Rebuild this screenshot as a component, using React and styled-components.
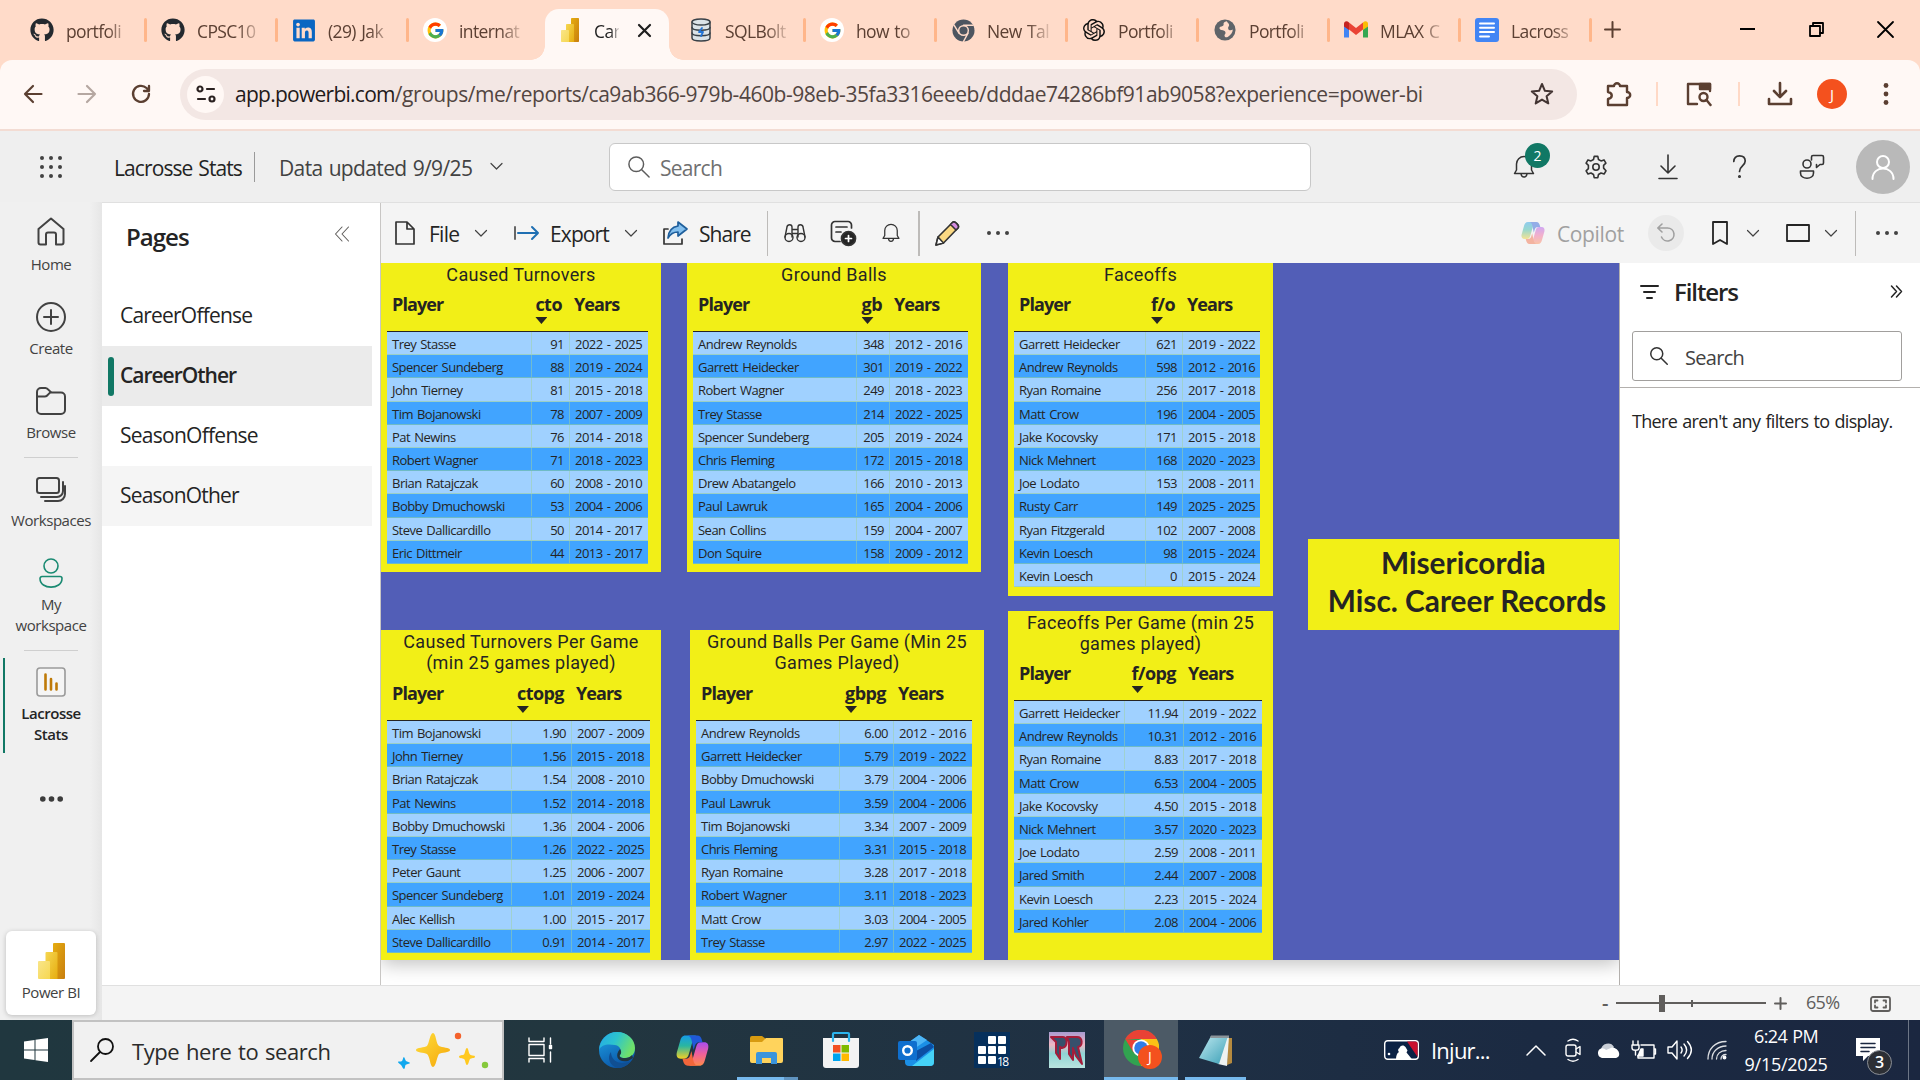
import React from "react";
import styled, { createGlobalStyle, css } from "styled-components";
import { FaGithub, FaLinkedin } from "react-icons/fa";
import { FcGoogle } from "react-icons/fc";
import { SiOpenai } from "react-icons/si";

const Global = createGlobalStyle`
  * { box-sizing: border-box; }
  html, body { margin: 0; padding: 0; overflow: hidden; }
  body { font-family: "Open Sans", "Noto Sans", sans-serif; color: #242424; }
`;

const Screen = styled.div`
  width: 1920px;
  height: 1080px;
  display: flex;
  flex-direction: column;
  overflow: hidden;
  background: #f0f0f0;
`;

const Label = styled.span`
  display: block;
  flex: none;
  white-space: nowrap;
  font-size: ${(p) => p.$size || 21}px;
  font-weight: ${(p) => p.$weight || 400};
  color: ${(p) => p.$color || "#242424"};
  letter-spacing: ${(p) => (p.$track === undefined ? -0.035 : p.$track)}em;
  word-spacing: 0.06em;
  margin-left: ${(p) => p.$gap || 0}px;
  padding-top: ${(p) => (p.$down || 0) * 2}px;
  width: ${(p) => (p.$w ? `${p.$w}px` : "auto")};
  text-align: ${(p) => p.$align || "left"};
  line-height: ${(p) => p.$line || 1.3};
`;

const Glyph = styled.svg.attrs((p) => ({
  viewBox: p.viewBox || `0 0 ${p.$w} ${p.$h || p.$w}`,
  width: p.$w,
  height: p.$h || p.$w,
}))`
  display: block;
  flex: none;
  margin-left: ${(p) => p.$gap || 0}px;
  fill: ${(p) => p.$fill || "none"};
  stroke: ${(p) => p.$stroke || "none"};
  stroke-width: ${(p) => p.$sw || 1.7};
  stroke-linecap: round;
  stroke-linejoin: round;
  opacity: ${(p) => (p.$faded ? 0.45 : 1)};
  overflow: visible;
`;

const Rule = styled.span`
  flex: none;
  width: ${(p) => p.$w || 1}px;
  height: ${(p) => p.$h}px;
  margin-left: ${(p) => p.$gap || 0}px;
  background: ${(p) => p.$color || "#bdbbb9"};
`;

/* ---------- browser tab strip ---------- */

const TabStrip = styled.div`
  height: 60px;
  flex: none;
  display: flex;
  align-items: flex-start;
  padding-left: 14px;
  background: #ffdbc9;
`;

const TabItem = styled.div`
  width: 131px;
  height: 60px;
  flex: none;
  display: flex;
  align-items: center;
  padding-left: 16px;
`;

const TabIcon = styled.span`
  width: 24px;
  height: 24px;
  flex: none;
  display: flex;
  align-items: center;
  justify-content: center;
  color: ${(p) => p.$color || "#24292f"};
  background: ${(p) => p.$bg || "transparent"};
  border-radius: ${(p) => (p.$bg ? "50%" : 0)};
`;

const TabText = styled.span`
  width: ${(p) => p.$w || 63}px;
  margin: 1px 0 0 12px;
  flex: none;
  white-space: nowrap;
  font-size: 17.500px;
  letter-spacing: -0.035em;
  word-spacing: 0.08em;
  color: ${(p) => p.$color || "#5c4033"};
  mask-image: linear-gradient(to right, #000 65%, rgba(0, 0, 0, 0.15) 100%);
`;

const TabSeparator = styled.span`
  width: 3px;
  height: 24px;
  margin-left: 14.5px;
  flex: none;
  border-radius: 2px;
  background: ${(p) => (p.$hidden ? "transparent" : "#ffb68a")};
`;

const ActiveTab = styled.div`
  position: relative;
  width: 124px;
  height: 51px;
  flex: none;
  margin: 9px 0 0 7px;
  padding: 0 0 9px 13px;
  display: flex;
  align-items: center;
  border-radius: 14px 14px 0 0;
  background: #fff8f5;
  &::before, &::after {
    content: "";
    position: absolute;
    bottom: 0;
    width: 14px;
    height: 14px;
  }
  &::before { left: -14px; background: radial-gradient(circle at 0 0, transparent 13.5px, #fff8f5 14px); }
  &::after { right: -14px; background: radial-gradient(circle at 100% 0, transparent 13.5px, #fff8f5 14px); }
`;

const WindowControls = styled.div`
  display: flex;
  align-items: center;
  height: 58px;
`;

/* ---------- browser toolbar ---------- */

const ToolbarBack = styled.div`
  height: 71px;
  flex: none;
  background: #ffdbc9;
`;

const BrowserToolbar = styled.div`
  height: 71px;
  padding-bottom: 1px;
  display: flex;
  align-items: center;
  border-radius: 12px 12px 0 0;
  border-bottom: 2px solid #f3dcd3;
  background: #fff8f5;
`;

const AddressBar = styled.div`
  width: 1397px;
  height: 51px;
  flex: none;
  margin-left: 30px;
  padding-left: 7px;
  display: flex;
  align-items: center;
  border-radius: 26px;
  background: #f3e7e4;
`;

const SiteChip = styled.span`
  width: 37px;
  height: 37px;
  flex: none;
  display: flex;
  align-items: center;
  justify-content: center;
  border-radius: 50%;
  background: #fff8f5;
`;

const Profile = styled.span`
  width: 30px;
  height: 30px;
  margin-left: 25px;
  flex: none;
  border-radius: 50%;
  text-align: center;
  font-size: 15px;
  line-height: 30px;
  color: #fff;
  background: #f4511e;
`;

/* ---------- power bi shell ---------- */

const ServiceHeader = styled.header`
  height: 71px;
  flex: none;
  display: flex;
  align-items: center;
  background: #efefef;
`;

const SearchField = styled.div`
  width: ${(p) => p.$w}px;
  height: ${(p) => p.$h}px;
  flex: none;
  margin-left: ${(p) => p.$gap || 0}px;
  padding-left: 17px;
  display: flex;
  align-items: center;
  border: 1px solid ${(p) => p.$border};
  border-radius: ${(p) => p.$radius || 6}px;
  background: #fff;
`;

const BellWrap = styled.span`
  position: relative;
  flex: none;
  margin-left: 202px;
`;

const Badge = styled.span`
  position: absolute;
  left: 12px;
  top: -12px;
  width: 25px;
  height: 25px;
  border-radius: 50%;
  text-align: center;
  font-size: 14px;
  line-height: 25px;
  color: #fff;
  background: #117865;
`;

const Avatar = styled.span`
  width: 54px;
  height: 54px;
  flex: none;
  margin-left: 31px;
  display: flex;
  align-items: center;
  justify-content: center;
  border-radius: 50%;
  background: #b9b9b9;
`;

const Body = styled.div`
  height: 818px;
  flex: none;
  display: flex;
`;

const Rail = styled.nav`
  width: 102px;
  flex: none;
  display: flex;
  flex-direction: column;
  align-items: center;
  background: linear-gradient(to right, #f0f0f0 88%, #e6e6e6);
`;

const RailItem = styled.div`
  width: ${(p) => (p.$active ? 96 : 102)}px;
  height: ${(p) => p.$h}px;
  padding: ${(p) => p.$top || 0}px 2px 0 0;
  flex: none;
  display: flex;
  flex-direction: column;
  align-items: center;
  border-left: 2px solid ${(p) => (p.$active ? "#117865" : "transparent")};
  margin-top: ${(p) => (p.$active ? 7 : 0)}px;
`;

const RailText = styled.span`
  margin-top: ${(p) => p.$gap || 6}px;
  text-align: center;
  font-size: 15px;
  line-height: 21px;
  letter-spacing: -0.03em;
  font-weight: ${(p) => (p.$strong ? 600 : 400)};
  color: ${(p) => (p.$strong ? "#242424" : "#424242")};
`;

const RailRule = styled.span`
  width: 54px;
  height: 1px;
  flex: none;
  background: #cfcfcf;
`;

const PowerCard = styled.div`
  width: 90px;
  height: 84px;
  flex: none;
  margin: 0 0 5px;
  padding-top: 12px;
  display: flex;
  flex-direction: column;
  align-items: center;
  border-radius: 6px;
  background: #fff;
  box-shadow: 0 1px 5px rgba(0, 0, 0, 0.22);
`;

const Spacer = styled.span`
  flex: ${(p) => (p.$w ? "none" : 1)};
  width: ${(p) => (p.$w ? `${p.$w}px` : "auto")};
`;

const Main = styled.main`
  width: 1818px;
  flex: none;
  display: flex;
  flex-direction: column;
  border-top: 1px solid #e0e0e0;
`;

const Workspace = styled.div`
  height: 782px;
  flex: none;
  display: flex;
`;

const PagesPane = styled.aside`
  width: 279px;
  flex: none;
  border-right: 1px solid #c8c6c4;
  background: #fff;
`;

const PagesHead = styled.div`
  height: 83px;
  padding: 0 31px 15px 24px;
  display: flex;
  align-items: center;
  justify-content: space-between;
`;

const PageLink = styled.div`
  width: 270px;
  height: 60px;
  padding-left: ${(p) => (p.$selected ? 6 : 18)}px;
  display: flex;
  align-items: center;
  background: ${(p) => (p.$selected ? "#ebebeb" : p.$hover ? "#f5f5f5" : "#fff")};
`;

const SelectedBar = styled.span`
  width: 6px;
  height: 39px;
  margin-right: 6px;
  border-radius: 3px;
  background: #117865;
`;

const ReportArea = styled.section`
  flex: 1;
  min-width: 0;
  display: flex;
  flex-direction: column;
`;

const ReportToolbar = styled.div`
  height: 60px;
  flex: none;
  display: flex;
  align-items: center;
  background: #f4f4f4;
`;

const UndoButton = styled.span`
  width: 36px;
  height: 36px;
  margin-left: 17px;
  flex: none;
  display: flex;
  align-items: center;
  justify-content: center;
  border-radius: 50%;
  background: #eaeaea;
`;

const ReportRow = styled.div`
  flex: 1;
  min-height: 0;
  display: flex;
`;

const Stage = styled.div`
  width: 1238px;
  flex: none;
  overflow: hidden;
  background: #fff;
`;

const Canvas = styled.div`
  height: 697px;
  display: flex;
  align-items: flex-start;
  background: #525eb7;
  box-shadow: 0 4px 18px rgba(0, 0, 0, 0.25);
`;

const Column = styled.div`
  flex: none;
  margin-left: ${(p) => p.$gap}px;
  display: flex;
  flex-direction: column;
`;

const Visual = styled.article`
  width: ${(p) => p.$w}px;
  height: ${(p) => p.$h}px;
  margin: ${(p) => p.$top || 0}px 0 0 ${(p) => p.$left || 0}px;
  padding: 1px 0 0 6px;
  display: flex;
  flex-direction: column;
  background: #f2ef17;
`;

const VisualTitle = styled.h3`
  margin: 0 0 0 -6px;
  height: ${(p) => p.$h}px;
  text-align: center;
  font-family: Roboto, sans-serif;
  font-weight: 400;
  font-size: 18px;
  line-height: 21px;
  letter-spacing: 0.018em;
  color: #252423;
`;

const gridColumns = css`
  display: grid;
  grid-template-columns: ${(p) => p.$cols.map((c) => `${c}px`).join(" ")};
`;

const HeadRow = styled.div`
  ${gridColumns}
  width: ${(p) => p.$cols.reduce((a, b) => a + b, 0)}px;
  height: 47px;
  border-bottom: 1px solid #252423;
`;

const HeadCell = styled.div`
  padding: 7px 0 0 5px;
  font-size: 18px;
  font-weight: 700;
  line-height: 25px;
  letter-spacing: -0.05em;
  white-space: nowrap;
  color: #252423;
`;

const ValueHead = styled(HeadCell)`
  display: flex;
  flex-direction: column;
  align-items: flex-end;
  padding: 7px 7px 0 0;
  letter-spacing: -0.03em;
`;

const SortArrow = styled.span`
  width: 12px;
  height: 7px;
  background: #252423;
  clip-path: polygon(0 0, 100% 0, 50% 100%);
`;

const HeadStack = styled.span`
  display: flex;
  flex-direction: column;
  align-items: flex-start;
`;

const DataRow = styled.div`
  ${gridColumns}
  width: ${(p) => p.$cols.reduce((a, b) => a + b, 0)}px;
  height: 23.2px;
  flex: none;
  background: ${(p) => (p.$odd ? "#41a4ff" : "#a0d1ff")};
  border-bottom: 1px solid rgba(150, 205, 150, 0.55);
`;

const Cell = styled.div`
  height: 22px;
  padding: 0 5px;
  font-size: 13px;
  line-height: 25px;
  letter-spacing: -0.04em;
  word-spacing: 1.2px;
  white-space: nowrap;
  text-align: ${(p) => (p.$num ? "right" : "left")};
  color: #252423;
  border-left: ${(p) => (p.$first ? "0" : "1px solid rgba(160, 210, 160, 0.5)")};
`;

const Banner = styled.div`
  width: 311px;
  height: 91px;
  flex: none;
  margin: 276px 0 0 35px;
  padding: 5px 0 0 7px;
  text-align: center;
  white-space: pre;
  font-family: Lato, sans-serif;
  font-size: 29.8px;
  font-weight: 700;
  line-height: 38px;
  color: #252423;
  background: #f2ef17;
`;

const FiltersPane = styled.aside`
  flex: 1;
  border-left: 1px solid #b3b0ad;
  background: #fff;
`;

const FiltersHead = styled.div`
  height: 68px;
  padding: 0 18px 11px 20px;
  display: flex;
  align-items: center;
`;

const FilterSearch = styled.div`
  padding: 0 0 6px 12px;
  border-bottom: 1px solid #b3b0ad;
`;

const FilterNote = styled.div`
  padding: 22px 0 0 12px;
`;

const StatusBar = styled.div`
  height: 35px;
  flex: none;
  display: flex;
  align-items: center;
  border-top: 1px solid #e0e0e0;
  background: #f4f4f4;
`;

const Slider = styled.div`
  width: 150px;
  height: 17px;
  margin-left: 6px;
  flex: none;
  display: flex;
  align-items: center;
`;

const SliderPart = styled.span`
  width: ${(p) => p.$w}px;
  height: ${(p) => p.$h}px;
  background: #605e5c;
`;

/* ---------- windows taskbar ---------- */

const Taskbar = styled.footer`
  height: 60px;
  flex: none;
  display: flex;
  align-items: stretch;
  background: linear-gradient(to right, #20373f 0%, #22363f 30%, #1f3044 60%, #1b2a42 80%, #1b2740 100%);
`;

const StartButton = styled.div`
  width: 72px;
  flex: none;
  display: flex;
  align-items: center;
  justify-content: center;
`;

const TaskSearch = styled.div`
  width: 432px;
  flex: none;
  padding-left: 16px;
  display: flex;
  align-items: center;
  border: 2px solid #c2c2c2;
  background: #f1f1f1;
`;

const TaskButton = styled.div`
  width: ${(p) => p.$w || 75}px;
  flex: none;
  display: flex;
  align-items: center;
  justify-content: center;
  background: ${(p) => (p.$active ? "#4c5a66" : "transparent")};
  border-bottom: 3px solid ${(p) => (p.$open ? "#76b9ed" : "transparent")};
  padding-top: 3px;
`;

const Stacked = styled.div`
  width: 14px;
  flex: none;
  border-bottom: 3px solid #5f93bf;
`;

const Tray = styled.div`
  flex: 1;
  display: flex;
  align-items: center;
`;

const Clock = styled.div`
  width: 106px;
  margin-left: 6px;
  flex: none;
  display: flex;
  flex-direction: column;
  align-items: center;
`;

const NoteWrap = styled.span`
  position: relative;
  flex: none;
  margin-left: 17px;
`;

const NoteCount = styled.span`
  position: absolute;
  left: 11px;
  top: 12px;
  width: 25px;
  height: 25px;
  border-radius: 50%;
  border: 1px solid #8b8f96;
  text-align: center;
  font-size: 16px;
  font-weight: 600;
  line-height: 23px;
  color: #fff;
  background: #2c2f35;
`;

/* ---------- drawings ---------- */

const PowerBiMark = ({ w, h }) => (
  <Glyph $w={w} $h={h} viewBox="0 0 27 36">
    <defs>
      <linearGradient id="pb1" x1="0" y1="0" x2="1" y2="1"><stop offset="0" stopColor="#e6ad10" /><stop offset="1" stopColor="#c87e0e" /></linearGradient>
      <linearGradient id="pb2" x1="0" y1="0" x2="1" y2="1"><stop offset="0" stopColor="#f6d751" /><stop offset="1" stopColor="#e6ad10" /></linearGradient>
      <linearGradient id="pb3" x1="0" y1="0" x2="1" y2="1"><stop offset="0" stopColor="#f9e589" /><stop offset="1" stopColor="#f6d751" /></linearGradient>
    </defs>
    <rect x="15" y="0" width="12" height="36" rx="1" fill="url(#pb1)" />
    <path d="M7.5 10a1 1 0 0 1 1-1h10a1 1 0 0 1 1 1v26h-12z" fill="url(#pb2)" />
    <path d="M0 19a1 1 0 0 1 1-1h10a1 1 0 0 1 1 1v17H1a1 1 0 0 1-1-1z" fill="url(#pb3)" />
  </Glyph>
);

const Chevron = ({ gap, w = 12 }) => (
  <Glyph $w={w} $h={7} viewBox="0 0 12 7" $gap={gap} $stroke="#424242" $sw={1.2}><path d="M.5.5 6 6 11.5.5" /></Glyph>
);

const Dots = ({ gap, size = 2, color = "#424242", span = 22 }) => (
  <Glyph $w={span} $h={6} $gap={gap} $fill={color}>
    <circle cx={size} cy="3" r={size} /><circle cx={span / 2} cy="3" r={size} /><circle cx={span - size} cy="3" r={size} />
  </Glyph>
);

const CopilotMark = ({ w, gap, faded, id }) => (
  <Glyph $w={w} viewBox="0 0 24 24" $gap={gap} $faded={faded}>
    <defs>
      <linearGradient id={`${id}a`} x1="0" y1="0" x2="0" y2="1"><stop offset="0" stopColor="#159be8" /><stop offset=".45" stopColor="#2ab6a0" /><stop offset="1" stopColor="#f4d023" /></linearGradient>
      <linearGradient id={`${id}b`} x1="0" y1="0" x2="0" y2="1"><stop offset="0" stopColor="#a74df0" /><stop offset=".5" stopColor="#f0609b" /><stop offset="1" stopColor="#ff8a4b" /></linearGradient>
    </defs>
    <path d="M15 1h-8C4.500 1 3.600 2.800 3 5L.6 13.500C0 16 1 18 3.500 18H6c2 0 2.800-1.500 3.300-3.200L12 5.500C12.600 3.200 13.500 1 15 1z" fill={`url(#${id}a)`} />
    <path d="M9 23h8c2.500 0 3.400-1.800 4-4l2.400-8.500C24 8 23 6 20.500 6H18c-2 0-2.800 1.500-3.300 3.200L12 18.500C11.400 20.800 10.500 23 9 23z" fill={`url(#${id}b)`} />
    <path d="M8 1h7.500c2 0 2.800 1.500 3.200 3l.6 2H17c-2 0-2.900 1.200-3.400 3l-.8 2.700-1.300-6.500C11 2.600 10 1 8 1z" fill="#2059d8" />
    <path d="M16 23H8.500c-2 0-2.800-1.500-3.200-3l-.6-2H7c2 0 2.900-1.200 3.400-3l.8-2.700 1.300 6.500C13 21.400 14 23 16 23z" fill="#f2663b" />
  </Glyph>
);

const ChromeMark = ({ w }) => (
  <Glyph $w={w} viewBox="0 0 48 48">
    <circle cx="24" cy="24" r="23" fill="#4d5560" />
    <path d="M24 13h20M14.500 29.500 4 12.500M33.500 29.500 24 47" stroke="#ffdbc9" strokeWidth="3" />
    <circle cx="24" cy="24" r="11.500" fill="#ffdbc9" />
    <circle cx="24" cy="24" r="8.500" fill="#4d5560" />
  </Glyph>
);

const Magnifier = ({ w, gap, color = "#5c5c5c", flip, sw = 1.6 }) => (
  <Glyph $w={w} viewBox="0 0 24 24" $gap={gap} $stroke={color} $sw={sw}>
    {flip ? <><circle cx="15.500" cy="8.500" r="7.500" /><path d="M10 14 1 23" /></> : <><circle cx="9" cy="9" r="8" /><path d="m15 15 8 8" /></>}
  </Glyph>
);

const Bell = ({ w, h, gap, box = "0 0 24 24" }) => (
  <Glyph $w={w} $h={h} viewBox={box} $gap={gap} $stroke="#333" $sw={1.5}>
    <path d="M2.500 18.500 4.500 15V9a7.500 7.500 0 0 1 15 0v6l2 3.500zM9 19c.3 2 1.300 3 3 3s2.700-1 3-3" />
  </Glyph>
);

const SqlMark = () => (
  <Glyph $w={22} $h={24} viewBox="0 0 22 24" $stroke="#3a4148" $sw={1.5}>
    <path d="M2 4v16c0 4 18 4 18 0V4" fill="#dce3e8" /><ellipse cx="11" cy="4" rx="9" ry="3" fill="#dce3e8" />
    <path d="M2 9.500c0 3.500 18 3.500 18 0M2 15c0 3.500 18 3.500 18 0" /><path d="m12 10-3 4h4l-2 4" stroke="#2474d6" strokeWidth="1.800" />
  </Glyph>
);

const GlobeMark = () => (
  <Glyph $w={22} viewBox="0 0 24 24">
    <circle cx="12" cy="12" r="11.500" fill="#5f6469" />
    <path d="M14 2.500c-3 .5-4 2-3.500 3.500s-2 2-3.500 2.500-1.500 3 1 3.500 4 .5 4.500 2.500-1.500 2.500-1 4 1.500 2 3.500 1c3.500-2 5.500-5 5.500-8-2 1-4.500 1-5-1s1-2.500 1-4-1.500-2-2.500-4z" fill="#ffdbc9" />
  </Glyph>
);

const GmailMark = () => (
  <Glyph $w={24} $h={18} viewBox="0 0 24 18">
    <path d="M0 3v13.500h5V7z" fill="#4285f4" /><path d="M24 3v13.500h-5V7z" fill="#34a853" />
    <path d="M5 8.500v-7l7 5.500 7-5.500v7L12 14z" fill="#ea4335" />
    <path d="M0 3C0 0 3-.5 5 1.500V9L0 5.500z" fill="#c5221f" /><path d="M19 1.500C21-.5 24 0 24 3v2.500L19 9z" fill="#fbbc04" />
  </Glyph>
);

const DocsMark = () => (
  <Glyph $w={24} viewBox="0 0 24 24"><rect width="24" height="24" rx="3" fill="#4285f4" /><path d="M5 5.500h14M5 9.800h14M5 14.100h14M5 18.400h9" stroke="#fff" strokeWidth="2" /></Glyph>
);

/* ---------- data ---------- */

const tabsLeft = [
  ["portfoli", <FaGithub size={24} key="i" />],
  ["CPSC10", <FaGithub size={24} key="i" />],
  ["(29) Jak", <FaLinkedin size={25} key="i" />, "#0a66c2"],
  ["internat", <FcGoogle size={19} key="i" />, null, "#fff"],
];
const tabsRight = [
  ["SQLBolt", <SqlMark key="i" />],
  ["how to", <FcGoogle size={19} key="i" />, null, "#fff"],
  ["New Tal", <ChromeMark key="i" w={23} />],
  ["Portfoli", <SiOpenai size={22} key="i" />, "#111"],
  ["Portfoli", <GlobeMark key="i" />],
  ["MLAX C", <GmailMark key="i" />],
  ["Lacross", <DocsMark key="i" />],
];

const careerTurnovers = [["Trey Stasse", "91", "2022 - 2025"], ["Spencer Sundeberg", "88", "2019 - 2024"], ["John Tierney", "81", "2015 - 2018"], ["Tim Bojanowski", "78", "2007 - 2009"], ["Pat Newins", "76", "2014 - 2018"], ["Robert Wagner", "71", "2018 - 2023"], ["Brian Ratajczak", "60", "2008 - 2010"], ["Bobby Dmuchowski", "53", "2004 - 2006"], ["Steve Dallicardillo", "50", "2014 - 2017"], ["Eric Dittmeir", "44", "2013 - 2017"]];
const turnoversPerGame = [["Tim Bojanowski", "1.90", "2007 - 2009"], ["John Tierney", "1.56", "2015 - 2018"], ["Brian Ratajczak", "1.54", "2008 - 2010"], ["Pat Newins", "1.52", "2014 - 2018"], ["Bobby Dmuchowski", "1.36", "2004 - 2006"], ["Trey Stasse", "1.26", "2022 - 2025"], ["Peter Gaunt", "1.25", "2006 - 2007"], ["Spencer Sundeberg", "1.01", "2019 - 2024"], ["Alec Kellish", "1.00", "2015 - 2017"], ["Steve Dallicardillo", "0.91", "2014 - 2017"]];
const groundBalls = [["Andrew Reynolds", "348", "2012 - 2016"], ["Garrett Heidecker", "301", "2019 - 2022"], ["Robert Wagner", "249", "2018 - 2023"], ["Trey Stasse", "214", "2022 - 2025"], ["Spencer Sundeberg", "205", "2019 - 2024"], ["Chris Fleming", "172", "2015 - 2018"], ["Drew Abatangelo", "166", "2010 - 2013"], ["Paul Lawruk", "165", "2004 - 2006"], ["Sean Collins", "159", "2004 - 2007"], ["Don Squire", "158", "2009 - 2012"]];
const groundBallsPerGame = [["Andrew Reynolds", "6.00", "2012 - 2016"], ["Garrett Heidecker", "5.79", "2019 - 2022"], ["Bobby Dmuchowski", "3.79", "2004 - 2006"], ["Paul Lawruk", "3.59", "2004 - 2006"], ["Tim Bojanowski", "3.34", "2007 - 2009"], ["Chris Fleming", "3.31", "2015 - 2018"], ["Ryan Romaine", "3.28", "2017 - 2018"], ["Robert Wagner", "3.11", "2018 - 2023"], ["Matt Crow", "3.03", "2004 - 2005"], ["Trey Stasse", "2.97", "2022 - 2025"]];
const faceoffs = [["Garrett Heidecker", "621", "2019 - 2022"], ["Andrew Reynolds", "598", "2012 - 2016"], ["Ryan Romaine", "256", "2017 - 2018"], ["Matt Crow", "196", "2004 - 2005"], ["Jake Kocovsky", "171", "2015 - 2018"], ["Nick Mehnert", "168", "2020 - 2023"], ["Joe Lodato", "153", "2008 - 2011"], ["Rusty Carr", "149", "2025 - 2025"], ["Ryan Fitzgerald", "102", "2007 - 2008"], ["Kevin Loesch", "98", "2015 - 2024"], ["Kevin Loesch", "0", "2015 - 2024"]];
const faceoffsPerGame = [["Garrett Heidecker", "11.94", "2019 - 2022"], ["Andrew Reynolds", "10.31", "2012 - 2016"], ["Ryan Romaine", "8.83", "2017 - 2018"], ["Matt Crow", "6.53", "2004 - 2005"], ["Jake Kocovsky", "4.50", "2015 - 2018"], ["Nick Mehnert", "3.57", "2020 - 2023"], ["Joe Lodato", "2.59", "2008 - 2011"], ["Jared Smith", "2.44", "2007 - 2008"], ["Kevin Loesch", "2.23", "2015 - 2024"], ["Jared Kohler", "2.08", "2004 - 2006"]];

const StatsTable = ({ title, metric, cols, rows, titleHeight, ...box }) => (
  <Visual {...box}>
    <VisualTitle $h={titleHeight}>{title.map((t) => <div key={t}>{t}</div>)}</VisualTitle>
    <HeadRow $cols={cols}>
      <HeadCell>Player</HeadCell>
      <ValueHead><HeadStack>{metric}<SortArrow /></HeadStack></ValueHead>
      <HeadCell>Years</HeadCell>
    </HeadRow>
    {rows.map((r, i) => (
      <DataRow key={i} $cols={cols} $odd={i % 2 === 1}>
        <Cell $first>{r[0]}</Cell><Cell $num>{r[1]}</Cell><Cell>{r[2]}</Cell>
      </DataRow>
    ))}
  </Visual>
);

const BrowserTab = ({ tab, last }) => (
  <TabItem>
    <TabIcon $color={tab[2]} $bg={tab[3]}>{tab[1]}</TabIcon>
    <TabText>{tab[0]}</TabText>
    <TabSeparator $hidden={last} />
  </TabItem>
);

const ink = "#424242";
const brown = "#5b3f31";

export default function App() {
  return (
    <Screen>
      <Global />
      <TabStrip>
        {tabsLeft.map((t, i) => <BrowserTab key={t[0]} tab={t} last={i === 3} />)}
        <ActiveTab>
          <TabIcon><PowerBiMark w={20} h={24} /></TabIcon>
          <TabText $w={25} $color="#1f1f1f">Car</TabText>
          <Glyph $w={11} $gap={20} $stroke="#1f1f1f" $sw={2.2}><path d="M0 0l11 11M11 0 0 11" /></Glyph>
        </ActiveTab>
        <Spacer $w={4} />
        {tabsRight.map((t, i) => <BrowserTab key={i} tab={t} />)}
        <WindowControls>
          <Glyph $w={15} $gap={15} $stroke={brown} $sw={2}><path d="M7.500 0v15M0 7.500h15" /></Glyph>
          <Glyph $w={15} $h={2} $gap={120} $fill="#000"><rect width="15" height="2" /></Glyph>
          <Glyph $w={15} $gap={54} $stroke="#000" $sw={1.8}><rect x="1" y="4" width="10" height="10" /><path d="M4 4V1h10v10h-3" /></Glyph>
          <Glyph $w={15} $gap={54} $stroke="#000" $sw={1.8}><path d="m0 0 15 15M15 0 0 15" /></Glyph>
        </WindowControls>
      </TabStrip>
      <ToolbarBack>
        <BrowserToolbar>
          <Glyph $w={18} $gap={24} $stroke={brown} $sw={2.2}><path d="M17.500 9H1M9 1 1 9l8 8" /></Glyph>
          <Glyph $w={18} $gap={36} $stroke="#b5a7a1" $sw={2.2}><path d="M.5 9H17M9 1l8 8-8 8" /></Glyph>
          <Glyph $w={18} $gap={36} $stroke={brown} $sw={2.3}><path d="M17 9a8 8 0 1 1-2.500-6L17 5.500M17 1v5h-5" /></Glyph>
          <AddressBar>
            <SiteChip><Glyph $w={20} $h={18} $stroke="#2a2120" $sw={2.2}><circle cx="4" cy="4" r="2.500" /><path d="M11 4h7M2 14h7" /><circle cx="16" cy="14" r="2.500" /></Glyph></SiteChip>
            <Label $size={21} $color="#1f1a19" $gap={11} $track={-0.035} $down={1}>app.powerbi.com</Label>
            <Label $size={21} $color="#524541" $track={-0.0215} $down={1}>/groups/me/reports/ca9ab366-979b-460b-98eb-35fa3316eeeb/dddae74286bf91ab9058?experience=power-bi</Label>
            <Spacer />
            <Glyph $w={24} viewBox="0 0 24 24" $stroke="#423432" $sw={2}><path d="m12 2 2.900 6.800 7.300.6-5.600 4.800 1.700 7.200L12 17.600l-6.300 3.800 1.700-7.200-5.600-4.800 7.300-.6z" /></Glyph>
            <Spacer $w={23} />
          </AddressBar>
          <Glyph $w={26} $gap={29} viewBox="0 0 26 26" $stroke={brown} $sw={2.4}><path d="M2 5h6a3 2.800 0 0 1 6 0h7v6a3 2.800 0 0 1 0 6v7H2v-6c5-1 5-6 0-7z" /></Glyph>
          <Rule $h={24} $w={2} $color="#ffd9c6" $gap={24} />
          <Glyph $w={26} $h={24} $gap={28} $stroke={brown} $sw={2.4}><path d="M11 22H2V2h22v7" /><path d="M14 2h10v5H14z" fill={brown} /><circle cx="17.500" cy="15" r="4" /><path d="m20.500 18 4 5" /></Glyph>
          <Rule $h={24} $w={2} $color="#ffd9c6" $gap={26} />
          <Glyph $w={24} $gap={28} $stroke={brown} $sw={2.6}><path d="M12 1v13M6 9l6 6 6-6M1 17v5h22v-5" /></Glyph>
          <Profile>J</Profile>
          <Glyph $w={6} $h={22} $gap={36} $fill={brown}><circle cx="3" cy="2.500" r="2.400" /><circle cx="3" cy="11" r="2.400" /><circle cx="3" cy="19.500" r="2.400" /></Glyph>
        </BrowserToolbar>
      </ToolbarBack>

      <ServiceHeader>
        <Glyph $w={22} $gap={40} $fill={ink}>{[2, 11, 20].map((x) => [2, 11, 20].map((y) => <circle key={`${x}${y}`} cx={x} cy={y} r="2" />))}</Glyph>
        <Label $gap={52} $w={140} $track={-0.043} $down={2}>Lacrosse Stats</Label>
        <Rule $h={30} $color="#9a9a9a" />
        <Label $gap={24} $w={211} $color={ink} $track={-0.03} $down={2}>Data updated 9/9/25</Label>
        <Chevron w={13} />
        <SearchField $w={702} $h={48} $gap={106} $border="#c8c8c8">
          <Magnifier w={22} gap={1} />
          <Label $gap={10} $color="#707070" $down={2}>Search</Label>
        </SearchField>
        <BellWrap><Bell w={22} h={24} box="1 0 22 24" /><Badge>2</Badge></BellWrap>
        <Glyph $w={26} $gap={48} viewBox="0 0 26 26" $stroke="#333" $sw={1.6}><path d="M10.500 4 11.200.9h3.600L15.500 4l2.500 1.400 3-1 1.900 3.200-2.300 2.200v2.800L23 15.300l-1.900 3.200-3.100-1-2.500 1.500-.7 3.200h-3.600l-.7-3.200L8 17.500l-3 1-1.900-3.200 2.300-2.200v-3.300L3.100 7.600 5 4.400l3 1z" transform="translate(0 1.500)" /><circle cx="13" cy="13" r="3.200" /></Glyph>
        <Glyph $w={18} $h={24} $gap={50} $stroke="#333" $sw={1.6}><path d="M9 0v18M2 11l7 7 7-7M0 23.500h18" /></Glyph>
        <Glyph $w={13} $h={23} $gap={56} $stroke="#333" $sw={1.7}><path d="M.8 6.500C1 3 3 .8 6.500.8s5.700 2.200 5.700 5.300C12.200 11 6.500 11 6.500 16.500" /><circle cx="6.500" cy="21.500" r=".7" /></Glyph>
        <Glyph $w={26} $h={24} $gap={53} viewBox="0 0 26 24" $stroke="#333" $sw={1.6}><circle cx="8" cy="9" r="4" /><path d="M1.500 16h13v2c0 7-13 7-13 0zM12.500 5V2c0-1 .5-1.500 1.500-1.500h9c1 0 1.500.5 1.500 1.500v6c0 1-.5 1.500-1.500 1.500h-2l-3.500 3v-3" /></Glyph>
        <Avatar><Glyph $w={24} $h={26} $stroke="#fff" $sw={2}><circle cx="12" cy="8" r="6" /><path d="M1.500 25c0-14 21-14 21 0" /></Glyph></Avatar>
      </ServiceHeader>

      <Body>
        <Rail>
          <RailItem $h={84} $top={15}><Glyph $w={28} $h={29} viewBox="0 0 28 29" $stroke={ink} $sw={2}><path d="M1.500 12 14 1.500 26.500 12v13.500a2 2 0 0 1-2 2H19v-10a2 2 0 0 0-2-2h-6a2 2 0 0 0-2 2v10H3.500a2 2 0 0 1-2-2z" /></Glyph><RailText $gap={8}>Home</RailText></RailItem>
          <RailItem $h={84} $top={16}><Glyph $w={30} $stroke={ink} $sw={2}><circle cx="15" cy="15" r="14" /><path d="M15 8v14M8 15h14" /></Glyph><RailText $gap={6}>Create</RailText></RailItem>
          <RailItem $h={87} $top={17}><Glyph $w={30} $h={28} $stroke={ink} $sw={2}><path d="M1 5a4 4 0 0 1 4-4h4.500c3 0 4 4.500 6.500 4.500h9a4 4 0 0 1 4 4V23a4 4 0 0 1-4 4H5a4 4 0 0 1-4-4zM1 9.500h8c3 0 3.500-4 6-4" /></Glyph><RailText $gap={7}>Browse</RailText></RailItem>
          <RailRule />
          <RailItem $h={88} $top={19}><Glyph $w={30} $h={25} $stroke={ink} $sw={2}><rect x="1" y="1" width="22" height="15" rx="2.500" /><path d="M5 20h16a6 6 0 0 0 6-6V5M9 24h13a7 7 0 0 0 7-7V9" /></Glyph><RailText $gap={8}>Workspaces</RailText></RailItem>
          <RailItem $h={104} $top={12}><Glyph $w={24} $h={30} $stroke="#1a8a72" $sw={1.6}><circle cx="12" cy="8" r="7" /><path d="M3 18.500h18a2 2 0 0 1 2 2C23 32 1 32 1 20.500a2 2 0 0 1 2-2z" /></Glyph><RailText $gap={6}>My<br />workspace</RailText></RailItem>
          <RailRule />
          <RailItem $h={95} $top={9} $active>
            <Glyph $w={30}><rect x="1" y="1" width="28" height="28" rx="3" fill="#f5f5f5" stroke="#9a9a9a" strokeWidth="1.600" /><path d="M9.500 7.500v15M15 12v10.500M20.500 16.500v6" stroke="#bf7a08" strokeWidth="2.600" /></Glyph>
            <RailText $gap={6} $strong>Lacrosse<br />Stats</RailText>
          </RailItem>
          <RailItem $h={60} $top={43}><Dots size={2.8} span={23} color="#3c3c3c" /></RailItem>
          <Spacer />
          <PowerCard><PowerBiMark w={27} h={36} /><RailText $gap={3}>Power BI</RailText></PowerCard>
        </Rail>

        <Main>
          <Workspace>
            <PagesPane>
              <PagesHead>
                <Label $size={24} $weight={600} $track={-0.04}>Pages</Label>
                <Glyph $w={14} $h={14} $stroke="#605e5c" $sw={1.1}><path d="M7 0 .5 7 7 14M13.500 0 7 7l6.500 7" transform="translate(0 -3)" /></Glyph>
              </PagesHead>
              <PageLink><Label $track={-0.038}>CareerOffense</Label></PageLink>
              <PageLink $selected><SelectedBar /><Label $weight={600} $track={-0.048}>CareerOther</Label></PageLink>
              <PageLink><Label>SeasonOffense</Label></PageLink>
              <PageLink $hover><Label $track={-0.038}>SeasonOther</Label></PageLink>
            </PagesPane>

            <ReportArea>
              <ReportToolbar>
                <Glyph $w={20} $h={24} $gap={14} $stroke="#333"><path d="M1 1h11l7 7v15H1zM12 1v7h7" /></Glyph>
                <Label $gap={14} $w={46} $down={1.5}>File</Label><Chevron gap={0} />
                <Glyph $w={25} $h={14} $gap={27} $stroke="#1f6fb2" $sw={2}><path d="M1 1v12" stroke="#666" /><path d="M4 7h20M18 1l6 6-6 6" /></Glyph>
                <Label $gap={11} $w={75} $track={-0.042} $down={1.5}>Export</Label><Chevron gap={0} />
                <Glyph $w={25} $h={24} $gap={26} $stroke="#333"><path d="M5 8H1v15h18v-5" /><path d="M15 1l9 7-9 7v-4c-5 0-7.500 1.500-10 6 .5-7 3.500-11 10-12z" fill="#83bfee" stroke="#1f5f9c" /></Glyph>
                <Label $gap={11} $w={68} $track={-0.045} $down={1.5}>Share</Label>
                <Rule $h={45} />
                <Glyph $w={22} $h={20} $gap={16} $stroke="#333" $sw={1.4}><circle cx="5" cy="14.500" r="4" /><circle cx="17" cy="14.500" r="4" /><path d="M1 14 3 4c.5-3 5-3 5 0M21 14 19 4c-.5-3-5-3-5 0M8 4v10M14 4v10M8 6.500h6v4H8" /></Glyph>
                <Glyph $w={26} $gap={24} viewBox="0 0 26 26" $stroke="#333"><path d="M10 21.500H5a3.500 3.500 0 0 1-3.500-3.500V5A3.500 3.500 0 0 1 5 1.500h13A3.500 3.500 0 0 1 21.500 5v3M6 7h11M6 12h5" /><circle cx="18.500" cy="18.500" r="7" fill="#242424" /><path d="M18.500 15.500v6M15.500 18.500h6" stroke="#fff" /></Glyph>
                <Bell w={20} gap={25} />
                <Rule $h={45} $w={2} $gap={17} />
                <Glyph $w={25} $gap={15} viewBox="0 0 25 25" $stroke="#333" $sw={1.6}><path d="m1 24 2-8L17.500 1.500c2-2 7.500 3 5.500 5.500L8.500 22z" fill="#fbd983" /><path d="M17.500 1.500c2-2 7.500 3 5.500 5.500l-2 2-5.500-5.500z" fill="#d58be0" /><path d="m1 24 2-8 5.500 6z" fill="#fff" /></Glyph>
                <Dots gap={27} />
                <Spacer $w={512} />
                <CopilotMark w={24} faded id="cp1" />
                <Label $gap={12} $w={74} $color="#a0a0a0" $track={-0.018} $down={1.5}>Copilot</Label>
                <UndoButton><Glyph $w={18} $h={18} $stroke="#a0a0a0" $sw={1.6}><path d="M5 0 .8 4 5 8M1 4h9.500a6.500 6.500 0 1 1-6 9" /></Glyph></UndoButton>
                <Glyph $w={16} $h={24} $gap={28} $stroke="#242424" $sw={1.8}><path d="M1 1h14v22l-7-4-7 4z" /></Glyph>
                <Chevron gap={19} />
                <Glyph $w={24} $h={18} $gap={27} $stroke="#242424" $sw={1.8}><rect x="1" y="1" width="22" height="16" /></Glyph>
                <Chevron gap={15} />
                <Rule $h={45} $gap={18} />
                <Dots gap={20} />
              </ReportToolbar>
              <ReportRow>
                <Stage>
                  <Canvas>
                    <Column $gap={0}>
                      <StatsTable title={["Caused Turnovers"]} metric="cto" cols={[144, 38, 79]} rows={careerTurnovers} titleHeight={21} $w={280} $h={309} />
                      <StatsTable title={["Caused Turnovers Per Game", "(min 25 games played)"]} metric="ctopg" cols={[124, 60, 79]} rows={turnoversPerGame} titleHeight={43} $w={280} $h={330} $top={58} />
                    </Column>
                    <Column $gap={26}>
                      <StatsTable title={["Ground Balls"]} metric="gb" cols={[163, 33, 79]} rows={groundBalls} titleHeight={21} $w={294} $h={309} />
                      <StatsTable title={["Ground Balls Per Game (Min 25", "Games Played)"]} metric="gbpg" cols={[143, 54, 79]} rows={groundBallsPerGame} titleHeight={43} $w={294} $h={330} $top={58} $left={3} />
                    </Column>
                    <Column $gap={24}>
                      <StatsTable title={["Faceoffs"]} metric="f/o" cols={[131, 37, 78]} rows={faceoffs} titleHeight={21} $w={265} $h={333} />
                      <StatsTable title={["Faceoffs Per Game (min 25", "games played)"]} metric="f/opg" cols={[110, 59, 79]} rows={faceoffsPerGame} titleHeight={42} $w={265} $h={349} $top={15} />
                    </Column>
                    <Banner>{"Misericordia \nMisc. Career Records"}</Banner>
                  </Canvas>
                </Stage>
                <FiltersPane>
                  <FiltersHead>
                    <Glyph $w={19} $h={16} $stroke="#242424" $sw={2}><path d="M1 2h17M4 8h11M7 14h5" /></Glyph>
                    <Label $size={24} $weight={600} $track={-0.045} $gap={15} $down={0.5}>Filters</Label>
                    <Spacer />
                    <Glyph $w={11} $h={11} $stroke="#242424" $sw={1.5}><path d="m.5 0 5 5.500-5 5.500M5.500 0l5 5.500-5 5.500" /></Glyph>
                  </FiltersHead>
                  <FilterSearch>
                    <SearchField $w={270} $h={50} $border="#a19f9d" $radius={3}>
                      <Magnifier w={18} color="#333" sw={2} />
                      <Label $size={20} $gap={17} $color="#424242" $down={1.5}>Search</Label>
                    </SearchField>
                  </FilterSearch>
                  <FilterNote><Label $size={18} $track={-0.037}>There aren't any filters to display.</Label></FilterNote>
                </FiltersPane>
              </ReportRow>
            </ReportArea>
          </Workspace>
          <StatusBar>
            <Label $gap={1500} $w={8} $size={20} $color="#605e5c" $weight={600}>-</Label>
            <Slider><SliderPart $w={43} $h={1.5} /><SliderPart $w={6} $h={17} /><SliderPart $w={26} $h={1.5} /><SliderPart $w={2} $h={7} /><SliderPart $w={73} $h={1.5} /></Slider>
            <Glyph $w={11} $gap={9} $stroke="#605e5c" $sw={2}><path d="M5.500 0v11M0 5.500h11" /></Glyph>
            <Label $gap={20} $w={54} $size={18} $color="#605e5c" $track={-0.04}>65%</Label>
            <Glyph $w={21} $h={15} $gap={10} $stroke="#605e5c" $sw={1.8}><rect x="1" y="1" width="19" height="14" rx="2" /><path d="M5 6.500V4.500h2.500M16 6.500V4.500h-2.500M5 9.500v2h2.500M16 9.500v2h-2.500" /></Glyph>
          </StatusBar>
        </Main>
      </Body>

      <Taskbar>
        <StartButton><Glyph $w={24} $fill="#fff"><path d="M0 3.500 10.500 2v9.500H0zM11.500 1.800 24 0v11.500H11.500zM0 12.500h10.500V22L0 20.500zM11.500 12.500H24V24l-12.500-1.800z" /></Glyph></StartButton>
        <TaskSearch>
          <Magnifier w={24} color="#111" flip sw={1.8} />
          <Label $size={22} $gap={18} $w={265} $track={-0.019} $color="#2b2b2b" $down={1}>Type here to search</Label>
          <Glyph $w={92} $h={40}>
            <defs><linearGradient id="star" x1="0" y1="0" x2="1" y2="1"><stop offset="0" stopColor="#ffdf3c" /><stop offset="1" stopColor="#f5a60a" /></linearGradient></defs>
            <path d="M36 3c3 0 3 11 6 13s11 1 11 4-9 2-11 4-3 13-6 13-3-11-6-13-11-1-11-4 9-2 11-4 3-13 6-13z" fill="url(#star)" />
            <path d="M70 18c1.500 0 1.500 5 3 6.500s5 .5 5 2.200-4 1-5 2.300-1.500 6-3 6-1.500-5-3-6-5-.5-5-2.300 4-1 5-2.200 1.500-6.500 3-6.500z" fill="#ffc91f" />
            <path d="M7 27c1 1 1 3 2 4s4 1 4 2-4 1-4.500 2-.5 4-1.500 4-2-3-3-4-3-2-3-3 3 0 4-1 1-4 2-4z" fill="#11a8ee" />
            <circle cx="61" cy="6" r="3.200" fill="#f4622c" /><circle cx="88" cy="35" r="3.200" fill="#86c93c" />
          </Glyph>
        </TaskSearch>
        <TaskButton $w={72}><Glyph $w={24} $stroke="#fff" $sw={1.4}><path d="M1 0v3.500h15V0M1 24v-3.500h15V24" /><rect x="1" y="6.500" width="15" height="11" /><path d="M22.500 0v6M22.500 14v10" /><rect x="21.500" y="7.500" width="2" height="3" fill="#fff" /></Glyph></TaskButton>
        <TaskButton $w={81}>
          <Glyph $w={36} viewBox="0 0 36 36">
            <defs><linearGradient id="edA" x1="0" y1="0" x2="1" y2=".4"><stop offset="0" stopColor="#25a7e8" /><stop offset=".5" stopColor="#2cc4cf" /><stop offset="1" stopColor="#6fe06a" /></linearGradient><linearGradient id="edB" x1="0" y1="0" x2=".5" y2="1"><stop offset="0" stopColor="#1fa4e6" /><stop offset="1" stopColor="#0b56a8" /></linearGradient></defs>
            <circle cx="18" cy="18" r="18" fill="url(#edB)" />
            <path d="M0 18C1 7 9 0 18 0c10 0 18 7 18 16 0 7-5 10-10 10-4 0-6-1.500-5-3 2-3 1-9-5-10C8 11.500 2 13 0 18z" fill="url(#edA)" />
            <path d="M12 20c0 9 9 14 20 9-3 4-8 7-13 7C10 34 8 25 12 20z" fill="#104f93" />
            <path d="M21 17c2 3 1 5 0 6s0 3 4 3c3 0 6-.5 8-3l1 3-5 3c-10 2-14-5-8-12z" fill="#213641" />
          </Glyph>
        </TaskButton>
        <TaskButton $w={70}><CopilotMark w={33} id="cp2" /></TaskButton>
        <Spacer $w={10} />
        <TaskButton $w={47} $open>
          <Glyph $w={33} $h={28} $gap={12}><path d="M0 2a2 2 0 0 1 2-2h10l4 3v5H0z" fill="#d89b10" /><path d="M0 6h12l4-4h16a1 1 0 0 1 1 1v22a2 2 0 0 1-2 2H2a2 2 0 0 1-2-2z" fill="#ffd35c" /><path d="M6 28V18a2 2 0 0 1 2-2h17a2 2 0 0 1 2 2v10h-6v-6h-9v6z" fill="#3b94dc" /></Glyph>
        </TaskButton>
        <Stacked />
        <Spacer $w={6} />
        <TaskButton $w={74}>
          <Glyph $w={36} $h={37}><path d="M10 9V2a1 1 0 0 1 1-1h14a1 1 0 0 1 1 1v7" stroke="#2cb5ee" strokeWidth="2.200" /><path d="M0 6h36v27a3 3 0 0 1-3 3H3a3 3 0 0 1-3-3z" fill="#f3f3f3" /><path d="M10 6v3M26 6v3" stroke="#2cb5ee" strokeWidth="2.200" /><path d="M10 13h7.500v7.500H10z" fill="#f25022" /><path d="M18.500 13H26v7.500h-7.500z" fill="#7fba00" /><path d="M10 21.500h7.500V29H10z" fill="#00a4ef" /><path d="M18.500 21.500H26V29h-7.500z" fill="#ffb900" /></Glyph>
        </TaskButton>
        <TaskButton $w={76}>
          <Glyph $w={36} $h={31}><path d="M7 10 21 0l15 10v17a4 4 0 0 1-4 4H11a4 4 0 0 1-4-4z" fill="#1b8fe6" /><path d="M7 10 21 0l8 5-22 15z" fill="#4db5f5" /><path d="M18 16 33 8l3 4-18 14z" fill="#0c4fa3" /><path d="M14 31 36 14v13a4 4 0 0 1-4 4z" fill="#45d2f7" /><rect y="6" width="19" height="19" rx="2" fill="#0f6fce" /><circle cx="9.500" cy="15.500" r="4.300" stroke="#fff" strokeWidth="2.400" /></Glyph>
        </TaskButton>
        <TaskButton $w={75}>
          <Glyph $w={36}><rect width="36" height="36" fill="#06305c" />{[[14, 4], [24, 4], [4, 14], [14, 14], [24, 14], [4, 24], [14, 24]].map(([x, y]) => <rect key={`${x}-${y}`} x={x} y={y} width="8" height="8" rx="1" fill="#fff" />)}<text x="23" y="34" fontSize="12" fontFamily="Open Sans" fill="#fff" textLength="12">18</text></Glyph>
        </TaskButton>
        <TaskButton $w={75}>
          <Glyph $w={36}>
            <defs><linearGradient id="pr" x1="0" y1="0" x2="0" y2="1"><stop offset="0" stopColor="#a99bd0" /><stop offset=".35" stopColor="#f0b6c4" /><stop offset=".6" stopColor="#8fd4d4" /><stop offset="1" stopColor="#b9e4df" /></linearGradient></defs>
            <rect width="36" height="36" fill="url(#pr)" />
            <path d="M2 5h12c5 0 5 10-1 11l-2-1v12l-4-6V10zM18 5h10c6 0 6 9 1 10l4 17-6-8-3-8v12l-4-6V10z" fill="#37506c" stroke="#a51c3a" strokeWidth="2" />
          </Glyph>
        </TaskButton>
        <TaskButton $w={74} $active $open>
          <Glyph $w={42} $h={40} $gap={5}>
            <svg x="0" y="0" width="36" height="36" viewBox="0 0 48 48"><circle cx="24" cy="24" r="24" fill="#31a350" /><path d="M3 12a24 24 0 0 1 42 0H24z" fill="#e94235" /><path d="M3 12 14 30l10-16z" fill="#e94235" /><path d="M24 48a24 24 0 0 0 21-36H24l10 18z" fill="#fbc116" /><circle cx="24" cy="24" r="11.500" fill="#fff" /><circle cx="24" cy="24" r="9" fill="#2f7de8" /></svg>
            <circle cx="27" cy="27" r="12" fill="#f4511e" /><text x="27" y="32" fontSize="14" fontFamily="Open Sans" fill="#fff" textAnchor="middle">J</text>
          </Glyph>
        </TaskButton>
        <Spacer $w={7} />
        <TaskButton $w={61} $open>
          <Glyph $w={34} $h={32}><defs><linearGradient id="np" x1="0" y1="0" x2="1" y2="1"><stop offset="0" stopColor="#bfe9f0" /><stop offset="1" stopColor="#3a9fb6" /></linearGradient></defs><path d="M29 4h4v25l-5 2z" fill="#b58a3f" /><path d="M12 2h18l-2 30-9-2z" fill="#eef2f2" /><path d="M12 2h17l-9 28L0 24z" fill="url(#np)" /><path d="M12 1.500h18v2.500H11z" fill="#8b9499" /></Glyph>
        </TaskButton>
        <Tray>
          <Glyph $w={35} $h={20} $gap={138}><rect x=".7" y=".7" width="33.600" height="18.600" rx="3" fill="#0a2144" stroke="#fff" strokeWidth="1.400" /><path d="M23 1.400h8a2.500 2.500 0 0 1 2.600 2.600v13z" fill="#c8102e" /><path d="M12 19.300c0-4 1-6 3-7.300-1.500-1.500-1-3 .5-4 .5-3 4.500-3.500 6-1l2 3.500-1 2 5.500 6.800z" fill="#fff" /><circle cx="5" cy="14" r="1.300" fill="#fff" /></Glyph>
          <Label $size={22} $gap={12} $w={66} $color="#fff" $track={-0.035} $down={0.5}>Injur...</Label>
          <Glyph $w={18} $h={9} $gap={30} $stroke="#fff" $sw={1.5}><path d="m0 9 9-9 9 9" /></Glyph>
          <Glyph $w={17} $h={22} $gap={20} $stroke="#fff" $sw={1.4}><rect x="1" y="6" width="10" height="11" rx="2" /><path d="m11 10 4-2.500v8L11 13M3 2c3-2 7-2 10 0M3 20.500c3 2 7 2 10 0" /></Glyph>
          <Glyph $w={24} $h={16} $gap={14}><path d="M5 8a7 7 0 0 1 13-3l-6 8z" fill="#c9ced6" /><path d="M6 16a5 5 0 0 1-1-9.500c2-.5 4 .5 5 1.500l6-2.500C24 6 26 16 19 16z" fill="#fff" /></Glyph>
          <Glyph $w={24} $h={18} $gap={12} $stroke="#fff" $sw={1.4}><path d="M6 14.500v2.500h16V4H9M22 8h1.500v5H22M1 0v4M6 0v4M0 4h7v3c0 3-7 3-7 0zM3.500 9.500V14" /><path d="M9 8h2v7H6z" fill="#fff" /></Glyph>
          <Glyph $w={23} $h={20} $gap={12} $stroke="#fff" $sw={1.4}><path d="M0 7h4l5-6v18l-5-6H0zM13 7c1.500 2 1.500 4 0 6M16 4c3.500 4 3.500 8 0 12M19.500 1.500c5 5.500 5 11.500 0 17" /></Glyph>
          <Glyph $w={20} $h={20} $gap={16} $stroke="#fff" $sw={1.3}><path d="M1 19C1 9 8 1.500 19 1.500M5 19C5 11.500 11 6 19 6M9.500 19c0-5 4-8.500 9.500-8.500M14 19c0-2.500 2-4.500 5-4.500" opacity=".85" /><circle cx="17.500" cy="17.500" r="1.300" fill="#fff" /></Glyph>
          <Clock>
            <Label $size={18} $color="#fff" $line="28px">6:24 PM</Label>
            <Label $size={18} $color="#fff" $line="28px" $track={-0.014}>9/15/2025</Label>
          </Clock>
          <NoteWrap><Glyph $w={24} $h={24}><path d="M0 0h24v18H12l-5 5v-5H0z" fill="#fff" /><path d="M5 5.500h14M5 9.500h14M5 13.500h8" stroke="#1b2740" strokeWidth="1.500" /></Glyph><NoteCount>3</NoteCount></NoteWrap>
          <Rule $h={60} $w={1} $gap={28} $color="#6d7686" />
        </Tray>
      </Taskbar>
    </Screen>
  );
}
